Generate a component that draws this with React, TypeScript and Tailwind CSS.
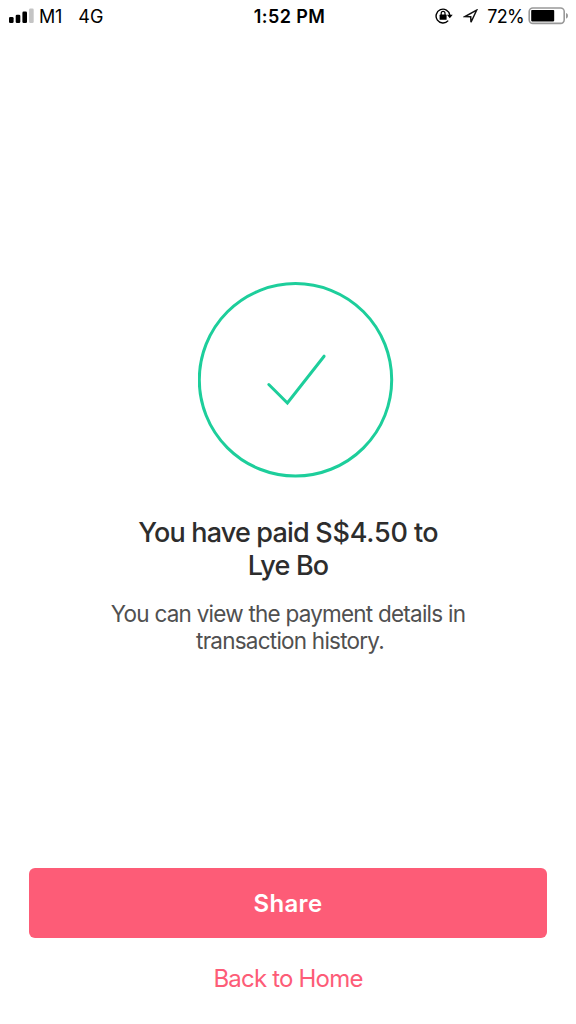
function SignalBars() {
  return (
    <svg width="26" height="16" viewBox="0 0 26 16" className="shrink-0">
      <rect x="0" y="9" width="4.6" height="6" rx="1.3" fill="#000" />
      <rect x="6.7" y="6.7" width="4.6" height="8.3" rx="1.3" fill="#000" />
      <rect x="13.4" y="3.6" width="4.6" height="11.4" rx="1.3" fill="#000" />
      <rect x="20.1" y="0.4" width="4.6" height="14.6" rx="1.3" fill="#c4c4c4" />
    </svg>
  )
}

function RotationLock() {
  return (
    <svg width="18" height="16" viewBox="0 0 18 16" fill="none" className="shrink-0">
      <path
        d="M13.2 12.6A6.9 6.9 0 1 1 14.8 7"
        stroke="#000"
        strokeWidth="1.4"
      />
      <path d="M11.9 6.7h5.8l-2.9 3.5z" fill="#000" />
      <rect x="4.6" y="6.6" width="7" height="5.2" rx="0.6" fill="#000" />
      <path d="M6.2 7V5.2a1.9 1.9 0 0 1 3.8 0V7" stroke="#000" strokeWidth="1.2" />
    </svg>
  )
}

function LocationArrow() {
  return (
    <svg width="15" height="15" viewBox="0 0 15 15" fill="none" className="shrink-0">
      <path
        d="M13.6 1.2L2 7.6l5.7.2.3 5.4z"
        stroke="#111"
        strokeWidth="1.5"
        strokeLinejoin="miter"
      />
    </svg>
  )
}

function Battery() {
  return (
    <svg width="41" height="18" viewBox="0 0 41 18" fill="none" className="shrink-0">
      <rect x="1.2" y="1" width="35" height="15.4" rx="3.6" stroke="#999" strokeWidth="1.6" />
      <rect x="3.2" y="3" width="23" height="11.4" rx="0.8" fill="#000" />
      <path d="M38 5.9c1.3.4 2 1.4 2 2.8s-.7 2.4-2 2.8z" fill="#999" />
    </svg>
  )
}

function StatusBar() {
  return (
    <header className="grid h-8 grid-cols-[1fr_auto_1fr] items-center text-[18px] leading-[30px] text-black">
      <div className="flex items-center pl-[9px]">
        <SignalBars />
        <span className="ml-1 pt-0.5 tracking-[-0.2px]">M1</span>
        <span className="ml-4 pt-0.5 tracking-[0.1px]">4G</span>
      </div>
      <span className="pt-0.5 pl-[3px] font-semibold tracking-[0.4px]">1:52 PM</span>
      <div className="flex items-center justify-end pr-[7px]">
        <div className="flex items-center gap-[10px]">
          <RotationLock />
          <LocationArrow />
        </div>
        <span className="ml-[9px] mr-[4px] pt-0.5 tracking-[-0.7px]">72%</span>
        <Battery />
      </div>
    </header>
  )
}

function SuccessIcon() {
  return (
    <svg
      width="196"
      height="196"
      viewBox="0 0 196 196"
      fill="none"
      stroke="#1dce9b"
      strokeWidth="3"
      className="ml-4"
    >
      <circle cx="97.5" cy="97.8" r="96.2" />
      <path d="M70.8 102.5L89.4 121L126.1 74.2" strokeLinecap="round" />
    </svg>
  )
}

export default function App() {
  return (
    <div className="flex h-[1024px] w-[576px] flex-col bg-white font-['Inter',sans-serif]">
      <StatusBar />

      <main className="flex flex-1 flex-col items-center pt-[250px] text-center">
        <SuccessIcon />
        <h1 className="mt-[38px] text-[27px] leading-[33px] font-medium tracking-[-0.82px] text-[#2d2d2d]">
          You have paid <span className="tracking-[-0.2px]">S$4.50</span> to
          <br />
          Lye Bo
        </h1>
        <p className="mt-[18px] text-[22.5px] leading-[27px] tracking-[-0.77px] text-[#505050]">
          You can view the payment details in
          <br />
          <span className="ml-1">transaction history.</span>
        </p>
      </main>

      <footer className="flex flex-col items-center px-[29px] pb-[29px]">
        <button className="h-[70px] w-full rounded-md bg-[#fd5c77] pt-px text-[24px] font-semibold tracking-[0.3px] text-white">
          Share
        </button>
        <button className="mt-[25px] text-[24px] leading-8 tracking-[-0.8px] text-[#fd5c77]">
          Back to Home
        </button>
      </footer>
    </div>
  )
}
